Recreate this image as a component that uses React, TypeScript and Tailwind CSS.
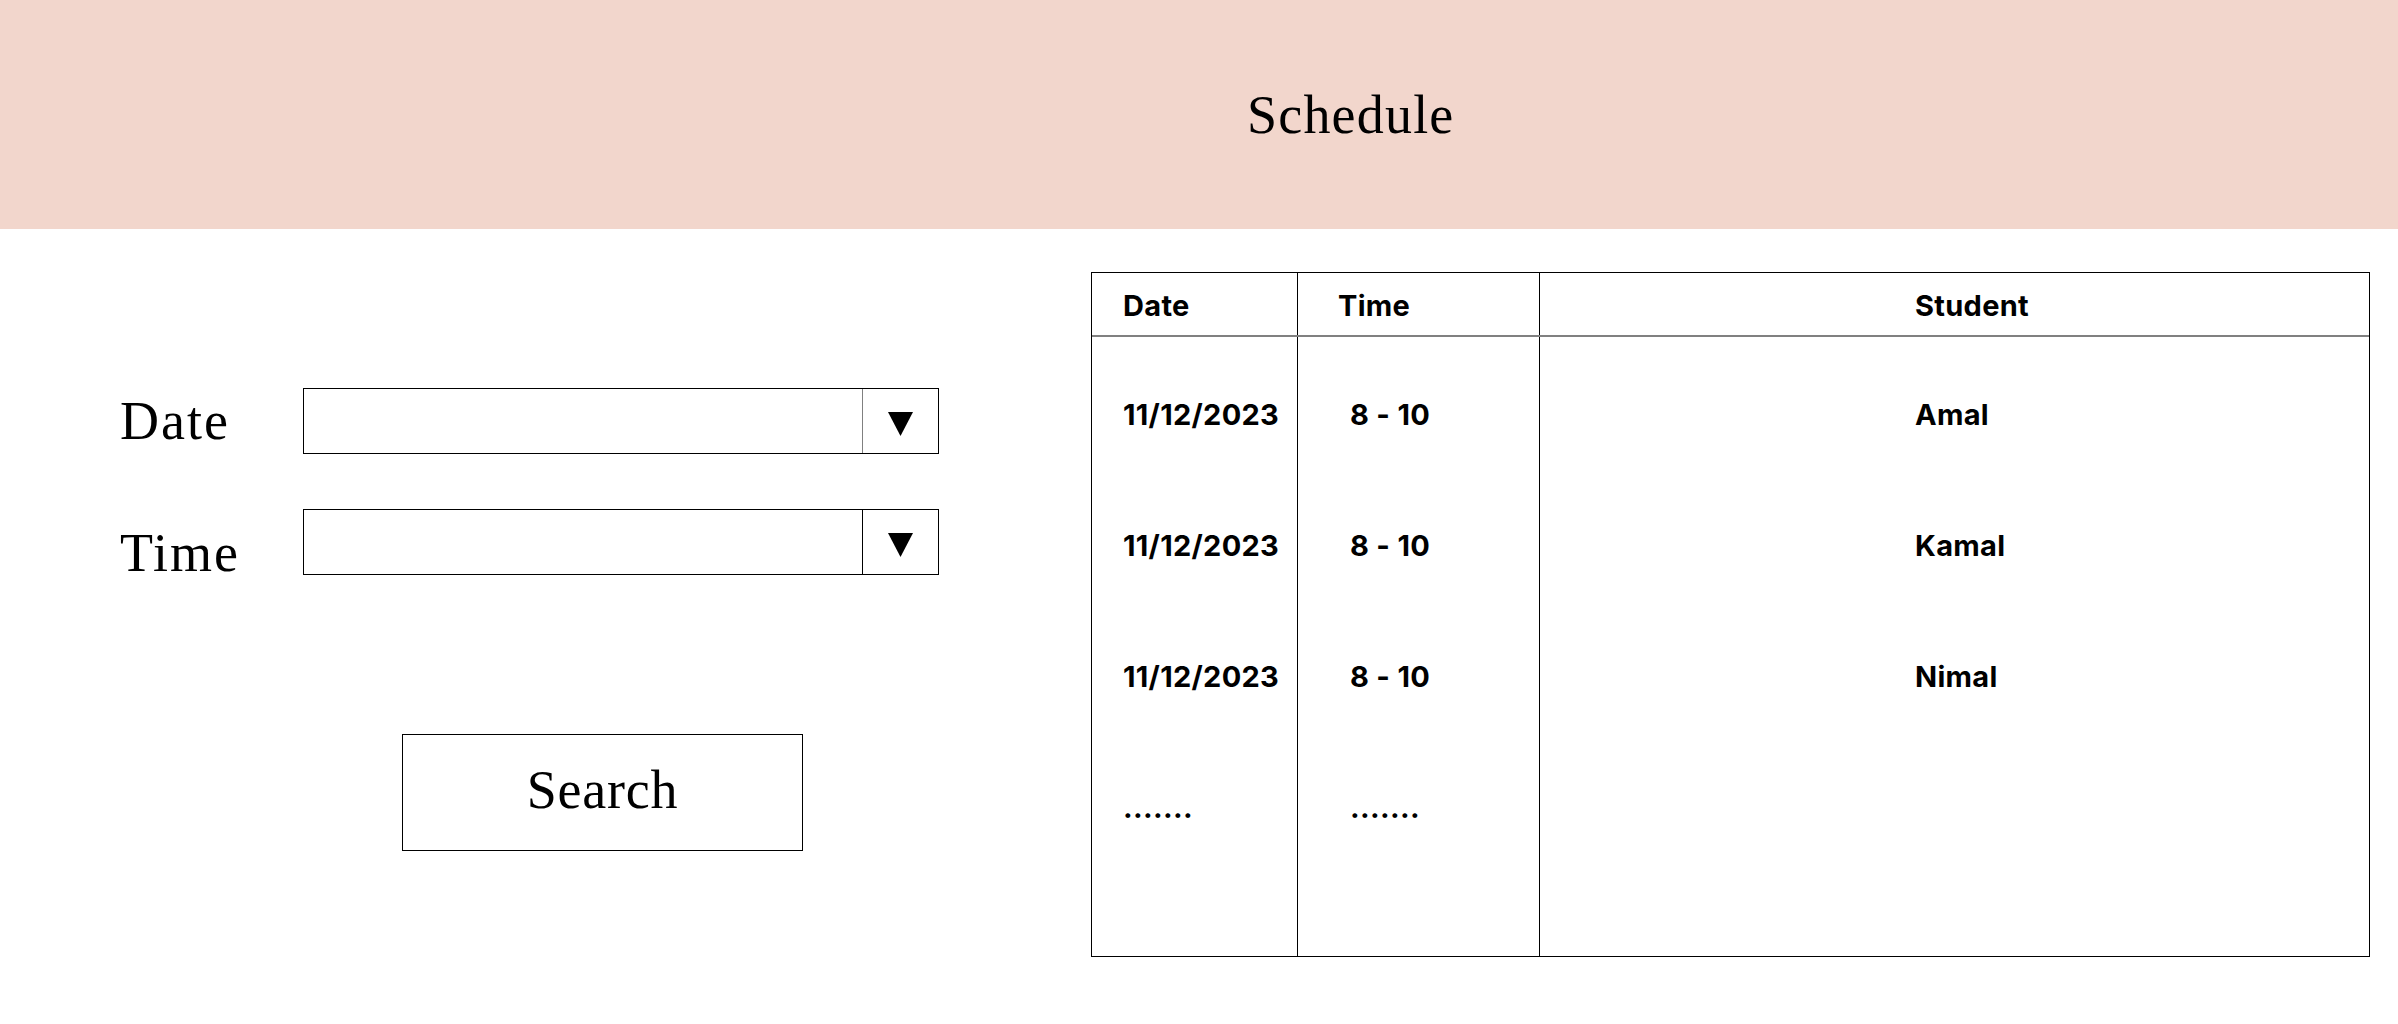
import React from "react";

const serif = { fontFamily: '"Liberation Serif", "Times New Roman", serif' };

function Select({ dividerClass }: { dividerClass: string }) {
  return (
    <div className="flex h-[66px] w-[636px] border border-black bg-white">
      <div className={`flex-1 border-r ${dividerClass}`} />
      <div className="flex w-[75px] items-center justify-center pt-[6px]">
        <svg width="25" height="24" viewBox="0 0 25 24">
          <polygon points="0,0 25,0 12.5,24" fill="#000" />
        </svg>
      </div>
    </div>
  );
}

const rows = [
  { date: "11/12/2023", time: "8 - 10", student: "Amal" },
  { date: "11/12/2023", time: "8 - 10", student: "Kamal" },
  { date: "11/12/2023", time: "8 - 10", student: "Nimal" },
  { date: ".......", time: ".......", student: "" },
];

export default function App() {
  return (
    <div className="min-h-screen w-full bg-white text-black">
      <header className="flex h-[229px] items-center bg-[#f2d6cc] pl-[1247px]">
        <h1 className="text-[54px] leading-none tracking-[1.2px]" style={serif}>
          Schedule
        </h1>
      </header>

      <div className="flex">
        {/* Left form */}
        <div className="w-[1091px] shrink-0 pt-[159px]">
          <div className="flex h-[66px] items-center pl-[120px]">
            <label className="w-[183px] text-[54px] leading-none tracking-[2px]" style={serif}>
              Date
            </label>
            <Select dividerClass="border-[#808080]" />
          </div>
          <div className="mt-[55px] flex h-[66px] items-center pl-[120px]">
            <label className="mt-[22px] w-[183px] text-[54px] leading-none tracking-[2px]" style={serif}>
              Time
            </label>
            <Select dividerClass="border-black" />
          </div>
          <div className="mt-[159px] pl-[402px]">
            <button
              className="flex h-[117px] w-[401px] items-center justify-center border border-black bg-white pb-[6px] text-[54px] leading-none tracking-[0.8px]"
              style={serif}
            >
              Search
            </button>
          </div>
        </div>

        {/* Table */}
        <div
          className="mt-[43px] flex h-[685px] w-[1279px] flex-col border border-black"
          style={{ fontFamily: 'Inter, "Liberation Sans", sans-serif' }}
        >
          <div className="flex h-[64px] border-b-2 border-[#808080] text-[29px] font-bold tracking-[0.3px]">
            <div className="flex w-[206px] items-center border-r border-black pl-[31px] pt-[4px]">Date</div>
            <div className="flex w-[242px] items-center border-r border-black pl-[40px] pt-[4px]">Time</div>
            <div className="flex flex-1 items-center pl-[375px] pt-[4px]">Student</div>
          </div>
          <div className="flex flex-1 text-[29px] font-bold tracking-[0.3px]">
            <div className="w-[206px] border-r border-black pl-[31px] pt-[12px]">
              {rows.map((r, i) => (
                <div key={i} className="flex h-[131px] items-center whitespace-nowrap">{r.date}</div>
              ))}
            </div>
            <div className="w-[242px] border-r border-black pl-[52px] pt-[12px]">
              {rows.map((r, i) => (
                <div key={i} className="flex h-[131px] items-center whitespace-nowrap">{r.time}</div>
              ))}
            </div>
            <div className="flex-1 pl-[375px] pt-[12px]">
              {rows.map((r, i) => (
                <div key={i} className="flex h-[131px] items-center">{r.student}</div>
              ))}
            </div>
          </div>
        </div>
      </div>
    </div>
  );
}
